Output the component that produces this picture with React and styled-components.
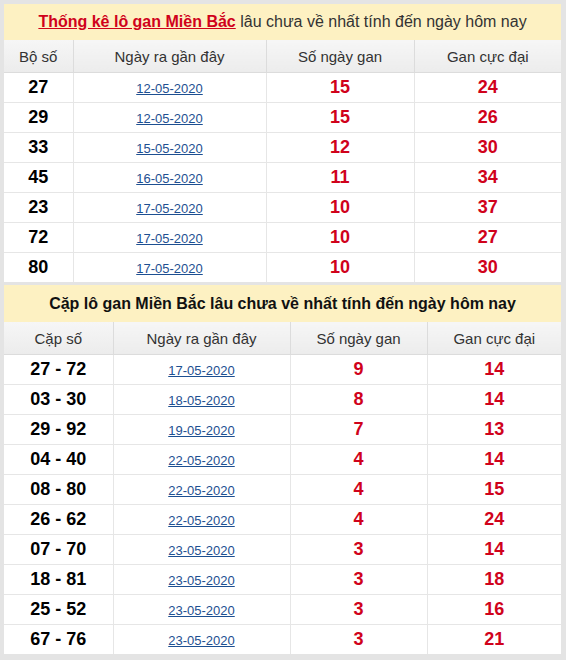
import React from "react";
import styled, { createGlobalStyle } from "styled-components";

const GlobalStyle = createGlobalStyle`
  html, body {
    margin: 0;
    padding: 0;
    background: #e4e4e4;
  }
  body {
    font-family: "Liberation Sans", Arial, sans-serif;
  }
`;

// bảng lô gan đơn
const singles = [
  ["27", "12-05-2020", 15, 24],
  ["29", "12-05-2020", 15, 26],
  ["33", "15-05-2020", 12, 30],
  ["45", "16-05-2020", 11, 34],
  ["23", "17-05-2020", 10, 37],
  ["72", "17-05-2020", 10, 27],
  ["80", "17-05-2020", 10, 30],
];

// bảng cặp lô gan
const pairs = [
  ["27 - 72", "17-05-2020", 9, 14],
  ["03 - 30", "18-05-2020", 8, 14],
  ["29 - 92", "19-05-2020", 7, 13],
  ["04 - 40", "22-05-2020", 4, 14],
  ["08 - 80", "22-05-2020", 4, 15],
  ["26 - 62", "22-05-2020", 4, 24],
  ["07 - 70", "23-05-2020", 3, 14],
  ["18 - 81", "23-05-2020", 3, 18],
  ["25 - 52", "23-05-2020", 3, 16],
  ["67 - 76", "23-05-2020", 3, 21],
];

function GanTable({ title, cols, firstLabel, rows, titleHeight }) {
  return (
    <Table>
      <colgroup>
        {cols.map((w, i) => (
          <col key={i} style={{ width: w }} />
        ))}
      </colgroup>
      <thead>
        <tr>
          <TitleCell colSpan={4} $h={titleHeight}>
            {title}
          </TitleCell>
        </tr>
        <tr>
          <HeadCell>{firstLabel}</HeadCell>
          <HeadCell>Ngày ra gần đây</HeadCell>
          <HeadCell>Số ngày gan</HeadCell>
          <HeadCell>Gan cực đại</HeadCell>
        </tr>
      </thead>
      <tbody>
        {rows.map((r) => (
          <tr key={r[0]}>
            <NumCell>{r[0]}</NumCell>
            <Cell>
              <DateLink href="#">{r[1]}</DateLink>
            </Cell>
            <RedCell>{r[2]}</RedCell>
            <RedCell>{r[3]}</RedCell>
          </tr>
        ))}
      </tbody>
    </Table>
  );
}

export default function App() {
  return (
    <Page>
      <GlobalStyle />
      <GanTable
        cols={[69, 193, 148, 147]}
        firstLabel="Bộ số"
        rows={singles}
        titleHeight={36}
        title={
          <>
            <TitleLink href="#">Thống kê lô gan Miền Bắc</TitleLink>{" "}
            <TitleRest>lâu chưa về nhất tính đến ngày hôm nay</TitleRest>
          </>
        }
      />
      <GanTable
        cols={[109, 177, 137, 134]}
        firstLabel="Cặp số"
        rows={pairs}
        titleHeight={37}
        title={
          <TitleBold>Cặp lô gan Miền Bắc lâu chưa về nhất tính đến ngày hôm nay</TitleBold>
        }
      />
    </Page>
  );
}

const Page = styled.div`
  width: 557px;
  padding: 4px 5px 4px 4px;
  display: flex;
  flex-direction: column;
  gap: 3px;
`;

const Table = styled.table`
  width: 557px;
  border-collapse: collapse;
  table-layout: fixed;
  background: #fff;
`;

const TitleCell = styled.th`
  height: ${(p) => p.$h}px;
  padding: 0;
  background: #fdf1c2;
  text-align: center;
  font-size: 16px;
  font-weight: normal;
`;

const TitleLink = styled.a`
  color: #d0021b;
  font-weight: bold;
  text-decoration: underline;
`;

const TitleRest = styled.span`
  color: #333;
`;

const TitleBold = styled.span`
  color: #111;
  font-weight: bold;
`;

const HeadCell = styled.th`
  height: 32px;
  padding: 0;
  background: linear-gradient(#f6f6f6, #ececec);
  border: 1px solid #dcdcdc;
  border-top: none;
  color: #333;
  font-size: 15px;
  font-weight: normal;
  text-align: center;
  &:first-child {
    border-left: none;
  }
  &:last-child {
    border-right: none;
  }
`;

const Cell = styled.td`
  height: 29px;
  padding: 0;
  border: 1px solid #e6e6e6;
  border-top: none;
  text-align: center;
  font-size: 13px;
  &:first-child {
    border-left: none;
  }
  &:last-child {
    border-right: none;
  }
  tr:last-child > & {
    border-bottom: none;
  }
`;

const NumCell = styled(Cell)`
  color: #000;
  font-size: 18px;
  font-weight: bold;
`;

const RedCell = styled(Cell)`
  color: #d0021b;
  font-size: 18px;
  font-weight: bold;
`;

const DateLink = styled.a`
  color: #1d4f91;
  text-decoration: underline;
  position: relative;
  top: 1px;
`;
